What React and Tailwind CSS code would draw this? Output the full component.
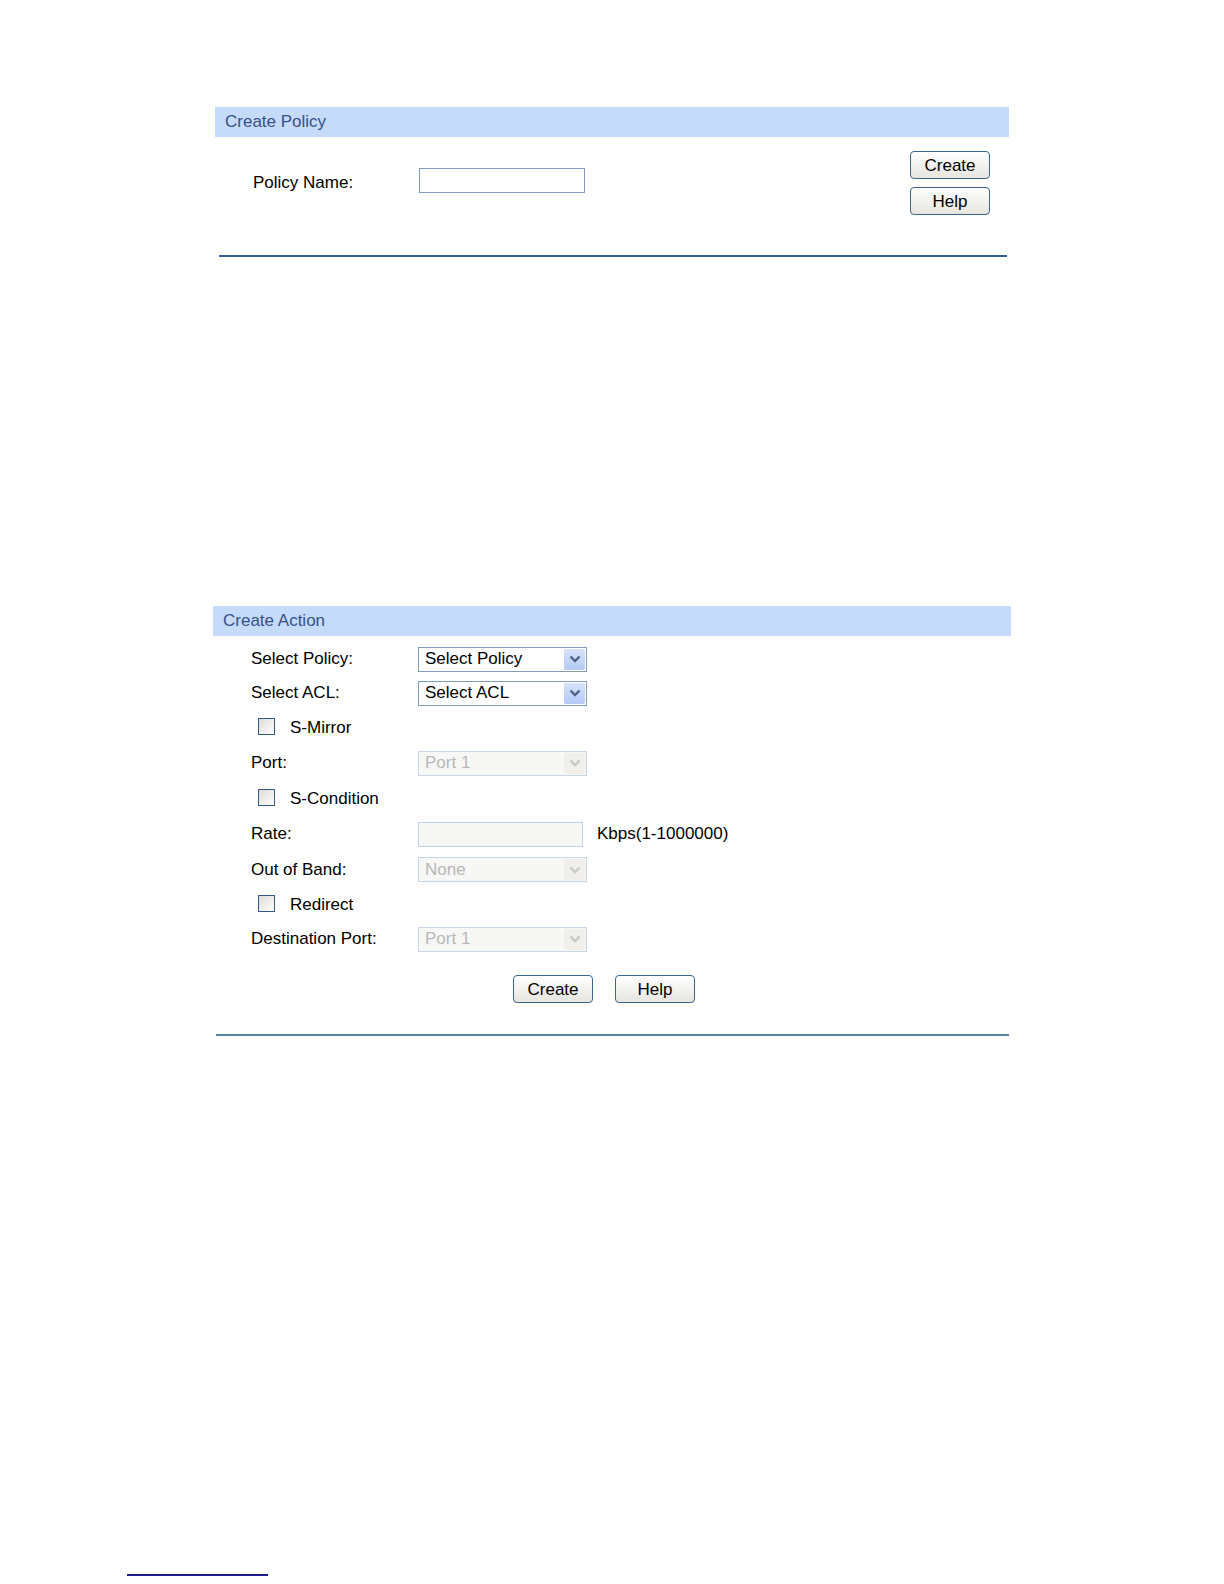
import React from 'react';

const font = { fontFamily: '"Liberation Sans", Arial, sans-serif' };

const XpButton = ({ children }) => (
  <button className="w-[80px] h-[28px] rounded-[4px] border border-[#3c6594] bg-gradient-to-b from-white to-[#e6e5de] text-[17px] text-black leading-none">
    {children}
  </button>
);

const Chevron = ({ color }) => (
  <svg width="12" height="8" viewBox="0 0 12 8">
    <path d="M1.5 1.5 L6 6 L10.5 1.5" fill="none" stroke={color} strokeWidth="2.4" />
  </svg>
);

const Select = ({ value, disabled }) => (
  <div
    className={`w-[169px] h-[25px] border flex items-center ${
      disabled ? 'border-[#c9d6e4] bg-[#f7f7f5]' : 'border-[#7f9db9] bg-white'
    }`}
  >
    <span className={`flex-1 pl-[6px] text-[17px] ${disabled ? 'text-[#b8b8b8]' : 'text-black'}`}>{value}</span>
    <div
      className={`w-[21px] h-[21px] mr-[1px] flex items-center justify-center rounded-[2px] ${
        disabled ? 'bg-[#f0efea]' : 'bg-gradient-to-b from-[#d6e3fd] to-[#b4c9f4]'
      }`}
    >
      <Chevron color={disabled ? '#c8c8c8' : '#4d6185'} />
    </div>
  </div>
);

const Checkbox = () => (
  <div className="w-[17px] h-[17px] border border-[#33588a] bg-gradient-to-br from-[#dcdcd6] to-white" />
);

const Header = ({ title }) => (
  <div className="h-[30px] bg-[#c6dafa] flex items-center pl-[10px]">
    <span className="text-[17px] text-[#35518b]">{title}</span>
  </div>
);

const FieldRow = ({ h, label, children }) => (
  <div className="flex items-center" style={{ height: h }}>
    <span className="w-[205px] pl-[38px] text-[17px] text-black shrink-0">{label}</span>
    {children}
  </div>
);

const CheckRow = ({ h, label }) => (
  <div className="flex items-center pl-[45px]" style={{ height: h }}>
    <div className="-mt-[3px]">
      <Checkbox />
    </div>
    <span className="ml-[15px] text-[17px] text-black">{label}</span>
  </div>
);

export default function App() {
  return (
    <div className="h-[1584px] overflow-hidden bg-white pt-[107px]" style={font}>
      {/* Create Policy */}
      <div className="ml-[215px] w-[794px]">
        <Header title="Create Policy" />
        <div className="flex items-center pt-[14px] pr-[19px]">
          <span className="w-[204px] pl-[38px] text-[17px] text-black">Policy Name:</span>
          <div className="w-[166px] h-[25px] mb-[6px] border border-[#7f9db9] bg-white" />
          <div className="flex-1" />
          <div className="flex flex-col gap-[8px]">
            <XpButton>Create</XpButton>
            <XpButton>Help</XpButton>
          </div>
        </div>
        <div className="mt-[40px] ml-[4px] w-[788px] h-[2px] bg-[#2f6290]" />
      </div>

      {/* Create Action */}
      <div className="ml-[213px] w-[798px] mt-[349px]">
        <Header title="Create Action" />
        <div className="pt-[6px]">
          <FieldRow h={34} label="Select Policy:">
            <Select value="Select Policy" />
          </FieldRow>
          <FieldRow h={34} label="Select ACL:">
            <Select value="Select ACL" />
          </FieldRow>
          <CheckRow h={35} label="S-Mirror" />
          <FieldRow h={36} label="Port:">
            <Select value="Port 1" disabled />
          </FieldRow>
          <CheckRow h={35} label="S-Condition" />
          <FieldRow h={36} label="Rate:">
            <div className="w-[165px] h-[25px] border border-[#c2d2e4] bg-[#f7f7f5]" />
            <span className="ml-[14px] text-[17px] text-black">Kbps(1-1000000)</span>
          </FieldRow>
          <FieldRow h={35} label="Out of Band:">
            <Select value="None" disabled />
          </FieldRow>
          <CheckRow h={35} label="Redirect" />
          <FieldRow h={34} label="Destination Port:">
            <Select value="Port 1" disabled />
          </FieldRow>
        </div>
        <div className="flex gap-[22px] pl-[300px] mt-[19px]">
          <XpButton>Create</XpButton>
          <XpButton>Help</XpButton>
        </div>
        <div className="mt-[31px] ml-[3px] w-[793px] h-[2px] bg-[#5a84a8]" />
      </div>

      {/* footnote rule */}
      <div className="ml-[127px] w-[141px] h-[2px] bg-[#1c1c8c] mt-[538px]" />
    </div>
  );
}
